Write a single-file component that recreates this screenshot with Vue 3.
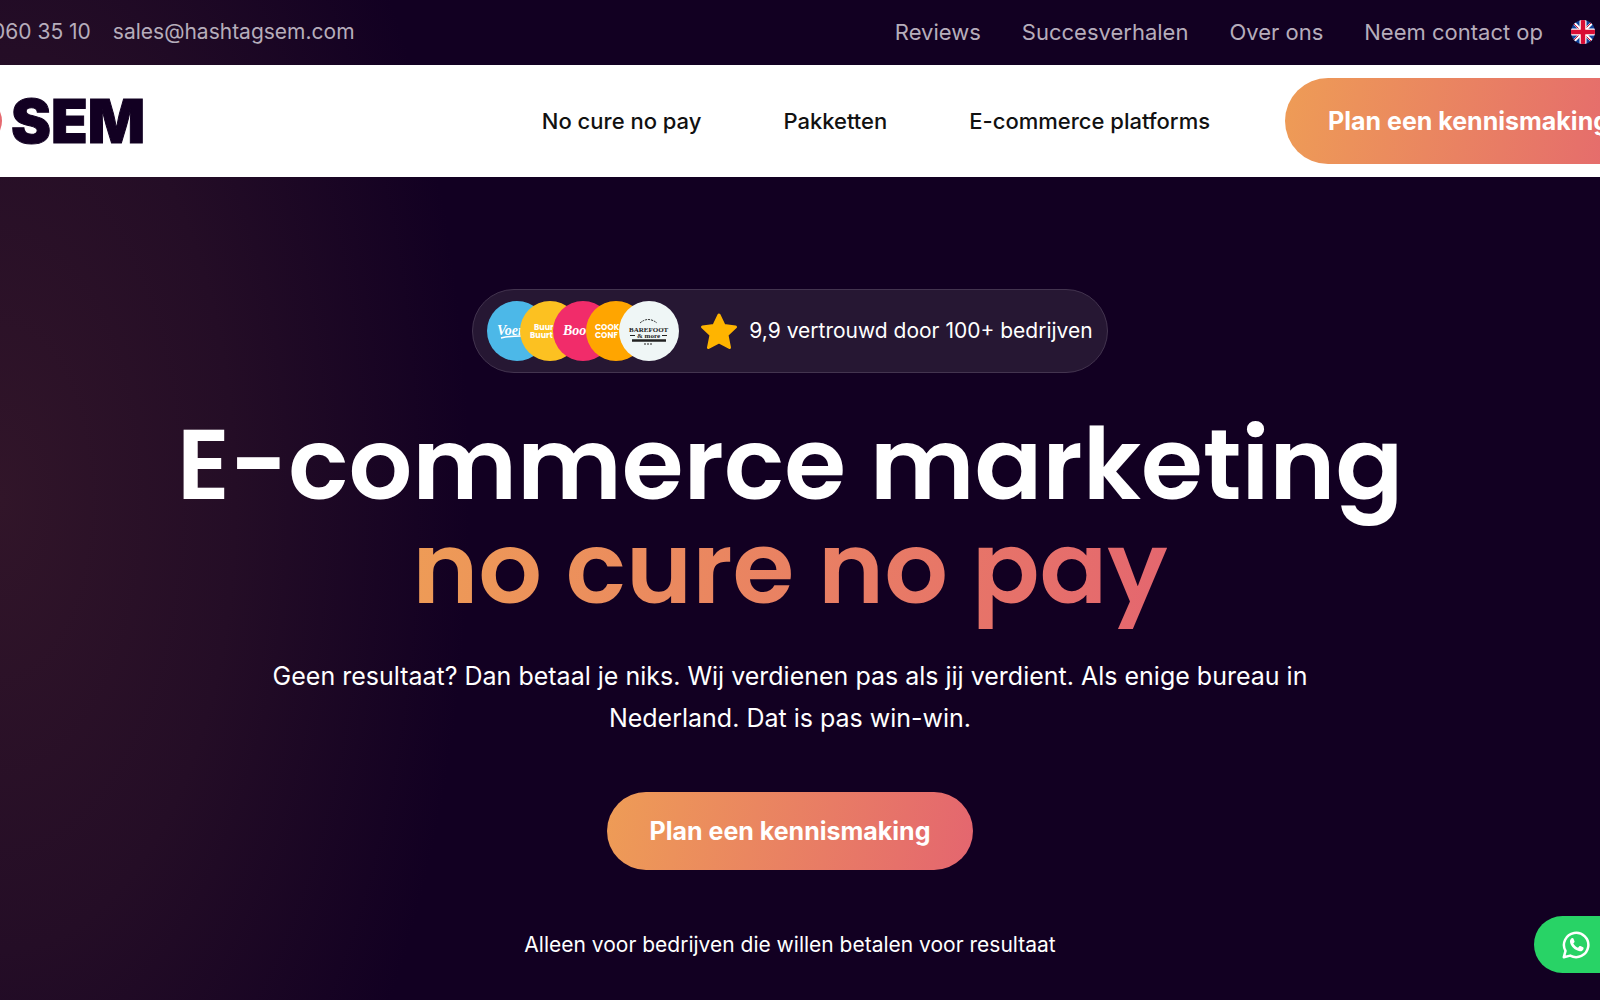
<script setup>
import { ref } from 'vue';

const topLinks = ref(['Reviews', 'Succesverhalen', 'Over ons', 'Neem contact op']);
const menuLinks = ref(['No cure no pay', 'Pakketten', 'E-commerce platforms']);

// customer logos in the trust badge
const brands = ref([
    { name: 'voer', color: '#4cb8e8', lines: [{ text: 'Voers', x: 10, y: 34, size: 14 }] },
    { name: 'buur', color: '#fcc121', lines: [{ text: 'Buur', x: 14, y: 29, size: 8 }, { text: 'Buurt', x: 10, y: 37, size: 8 }] },
    { name: 'boo', color: '#f12c6a', lines: [{ text: 'Boo', x: 10, y: 34, size: 14 }] },
    { name: 'cook', color: '#ffa500', lines: [{ text: 'COOK', x: 9, y: 29, size: 8 }, { text: 'CONF', x: 9, y: 37, size: 8 }] },
    { name: 'barefoot', color: '#eff6f6', lines: [{ text: 'BAREFOOT', x: 10, y: 31, size: 7 }, { text: '& more', x: 18, y: 37, size: 7 }] },
]);
</script>

<template>
    <div class="page">
        <div class="topbar">
            <div class="contact">
                <a href="#">060 35 10</a>
                <a href="#">sales@hashtagsem.com</a>
            </div>
            <nav class="top-nav">
                <a v-for="link in topLinks" :key="link" href="#">{{ link }}</a>
                <a href="#" class="flag" aria-label="English">
                    <svg width="24" height="24" viewBox="0 0 24 24">
                        <clipPath id="flag-round"><circle cx="12" cy="12" r="12" /></clipPath>
                        <g clip-path="url(#flag-round)">
                            <path fill="#12449b" d="M0 0h24v24H0z" />
                            <path stroke="#fff" stroke-width="3" d="M0 0l24 24M24 0L0 24" />
                            <path stroke="#d80d35" stroke-width="1" d="M0 1l24 24M24 -1L0 23" />
                            <path stroke="#fff" stroke-width="7" d="M12 0v24M0 12h24" />
                            <path stroke="#d80d35" stroke-width="4.500" d="M12 0v24M0 12h24" />
                        </g>
                    </svg>
                </a>
            </nav>
        </div>

        <header class="header">
            <a href="#" class="logo">
                <svg width="3" height="48" viewBox="45 0 3 48"><circle cx="24" cy="24" r="23" fill="#e5696f" /></svg>
                <span>SEM</span>
            </a>
            <nav class="menu">
                <a v-for="link in menuLinks" :key="link" href="#">{{ link }}</a>
            </nav>
            <button class="btn btn-header">Plan een kennismaking</button>
        </header>

        <main class="hero">
            <div class="trust">
                <div class="brands">
                    <svg v-for="brand in brands" :key="brand.name" class="brand" :class="brand.name" width="60" height="60" viewBox="0 0 60 60">
                        <circle cx="30" cy="30" r="30" :fill="brand.color" />
                        <text v-for="line in brand.lines" :key="line.text" :x="line.x" :y="line.y" :font-size="line.size">{{ line.text }}</text>
                        <path v-if="brand.name === 'voer'" stroke="#fff" stroke-width="1.5" fill="none" d="M14 37q9-2 20-2" />
                        <g v-if="brand.name === 'barefoot'" fill="none" stroke="#222">
                            <path stroke-dasharray="2 1" d="M21 22q8-7 17 0" />
                            <path d="M11 34.500h5M43 34.500h5" />
                            <path stroke-width="2.500" d="M13 39.500h34" />
                            <path stroke-dasharray="2 1" d="M25 43h9" />
                        </g>
                    </svg>
                </div>
                <svg class="star" width="38" height="38" viewBox="0 0 38 38">
                    <path fill="#ffb400" stroke="#ffb400" stroke-width="3" stroke-linejoin="round" d="M19 3l5 10.500 11.500 1.500-8.500 8 2.500 12.500L19 30 8.500 35.500 11 23l-8.500-8L14 13.500z" />
                </svg>
                <span class="score">9,9 vertrouwd door 100+ bedrijven</span>
            </div>
            <h1>E-commerce marketing <span>no cure no pay</span></h1>
            <p class="lead">Geen resultaat? Dan betaal je niks. Wij verdienen pas als jij verdient. Als enige bureau in Nederland. Dat is pas win-win.</p>
            <button class="btn">Plan een kennismaking</button>
            <p class="note">Alleen voor bedrijven die willen betalen voor resultaat</p>
        </main>

        <a href="#" class="whatsapp" aria-label="WhatsApp">
            <svg width="28" height="28" viewBox="0 0 28 28">
                <path fill="none" stroke="#fff" stroke-width="2.500" stroke-linejoin="round" d="M1.800 26.200l1.700-6.300A12.200 12.200 0 1 1 8.200 24.600z" />
                <path fill="#fff" d="M9.600 7.300c.6-.5 1.500-.4 1.800.3l1.100 2.600c.2.500.1.900-.3 1.300l-.9 1.100c1.100 2 2.600 3.300 4.700 4.200l1.300-1.500c.3-.4.700-.5 1.200-.3l2.600 1.300c.5.200.6.600.5 1.100-.3 2-2 3-3.800 2.800-4.600-.5-9.100-4.600-9.800-9.100-.2-1.600.4-2.900 1.600-3.800z" />
            </svg>
        </a>
    </div>
</template>

<style>
body {
    margin: 0;
    background: #120022;
}
</style>

<style scoped>
.page {
    min-height: 100vh;
    overflow: hidden;
    color: #fff;
    font-family: Inter, sans-serif;
    background: radial-gradient(470px 900px at 0 500px, #311529, #240d26 50%, #120022) #120022;
}
a {
    color: inherit;
    text-decoration: none;
}
.topbar {
    display: flex;
    justify-content: space-between;
    align-items: center;
    box-sizing: border-box;
    height: 65px;
    padding: 0 5px 2px 0;
    color: #b6adbb;
    font-size: 22px;
}
.contact {
    display: flex;
    gap: 22px;
    margin-left: -8px;
    font-size: 21px;
}
.top-nav {
    display: flex;
    align-items: center;
    gap: 41px;
}
.flag {
    display: flex;
    margin-left: -13px;
}
.header {
    display: flex;
    align-items: center;
    height: 112px;
    background: #fff;
}
.logo {
    display: flex;
    align-items: center;
    gap: 8px;
    margin-right: auto;
    color: #120022;
    font-size: 60px;
    font-weight: 900;
    -webkit-text-stroke: 1px #120022;
}
.menu {
    display: flex;
    gap: 82px;
    margin-right: 75px;
    color: #111;
    font-size: 22px;
    font-weight: 500;
}
.btn {
    flex-shrink: 0;
    height: 78px;
    padding: 0 43px;
    border: 0;
    border-radius: 43px;
    color: #fff;
    font: 700 25px Inter, sans-serif;
    background: linear-gradient(100deg, #ee9c56, #e4666f);
    cursor: pointer;
}
.btn-header {
    height: 86px;
    margin-right: -52px;
}
.hero {
    display: flex;
    flex-direction: column;
    align-items: center;
    padding: 112px 20px 36px 0;
    text-align: center;
}
.trust {
    display: flex;
    align-items: center;
    box-sizing: border-box;
    height: 84px;
    padding: 0 14px;
    border: 1px solid #43344f;
    border-radius: 42px;
    background: #261733;
    font-size: 21px;
}
.score {
    padding-bottom: 2px;
}
.brands {
    display: flex;
}
.brand + .brand {
    margin-left: -27px;
}
.brand text {
    fill: #fff;
    font-family: Poppins, "Liberation Sans", sans-serif;
    font-weight: 700;
}
.voer text, .boo text {
    font-family: "Liberation Serif", serif;
    font-style: italic;
}
.barefoot text {
    fill: #222;
    font-family: "Liberation Serif", serif;
}
.star {
    margin: 0 11px 0 21px;
}
h1 {
    margin: 39px 0 0;
    font-family: Poppins, Inter, sans-serif;
    font-size: 100px;
    font-weight: 600;
    line-height: 104px;
}
h1 span {
    display: block;
    width: fit-content;
    margin: 0 auto;
    padding-bottom: 20px;
    color: transparent;
    background: linear-gradient(100deg, #ee9c56, #e4666f);
    background-clip: text;
}
.lead {
    max-width: 1060px;
    margin: 15px 0 53px;
    font-size: 25px;
    line-height: 42px;
}
.note {
    margin: 59px 0 0;
    font-size: 21px;
    line-height: 32px;
}
.whatsapp {
    position: fixed;
    right: 0;
    bottom: 27px;
    display: flex;
    align-items: center;
    height: 57px;
    padding: 0 10px 0 28px;
    border-radius: 29px 0 0 29px;
    background: #28d366;
}
</style>
